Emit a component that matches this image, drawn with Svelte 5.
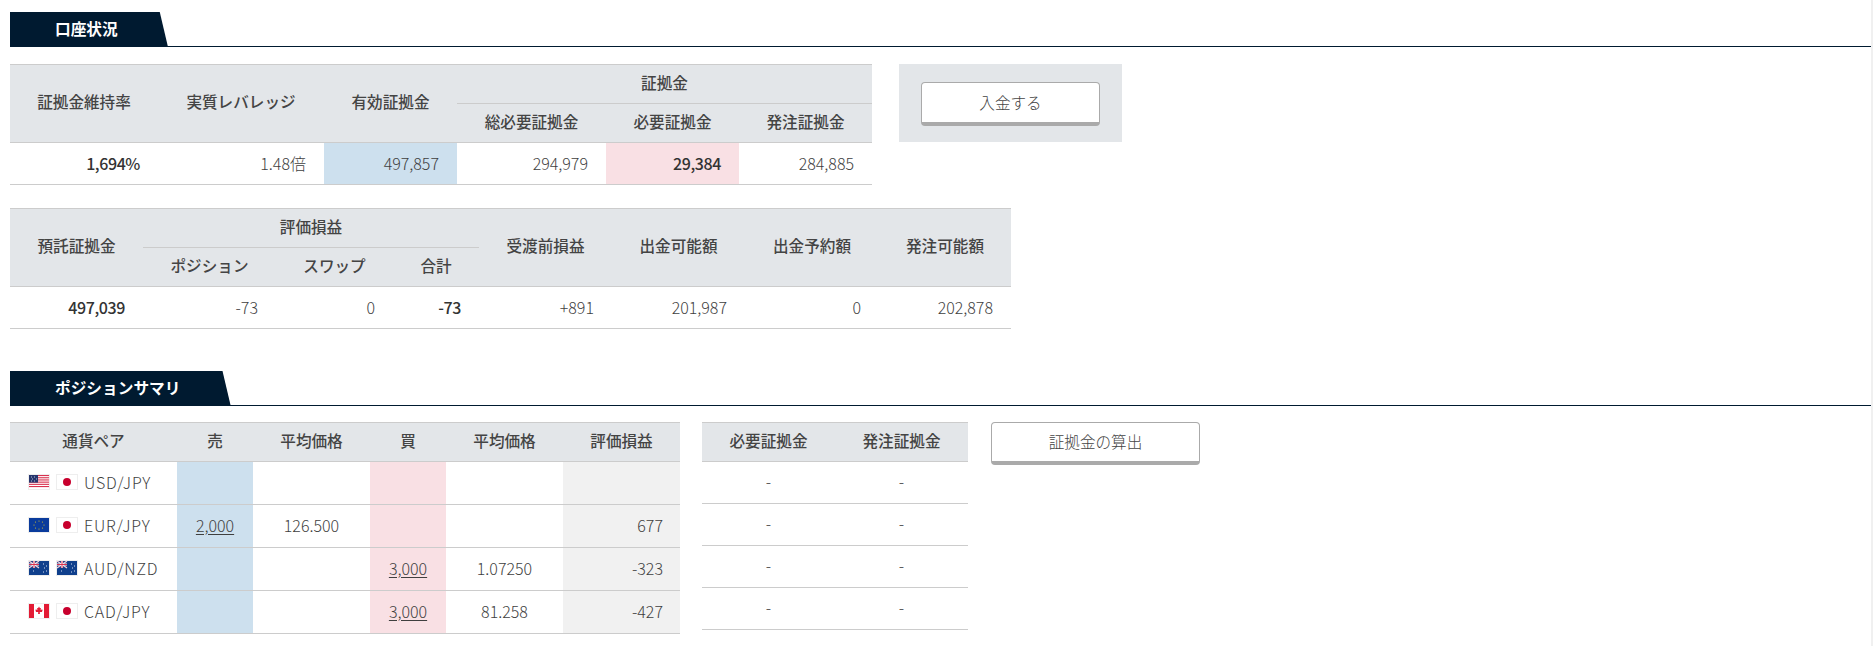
<script>
  const pairs = [
    { a: "us", b: "jp", name: "USD/JPY", sell: "", sellAvg: "", buy: "", buyAvg: "", pl: "" },
    { a: "eu", b: "jp", name: "EUR/JPY", sell: "2,000", sellAvg: "126.500", buy: "", buyAvg: "", pl: "677" },
    { a: "au", b: "nz", name: "AUD/NZD", sell: "", sellAvg: "", buy: "3,000", buyAvg: "1.07250", pl: "-323" },
    { a: "ca", b: "jp", name: "CAD/JPY", sell: "", sellAvg: "", buy: "3,000", buyAvg: "81.258", pl: "-427" }
  ];
  const stars = [[12,3],[15.5,4],[17,7],[15.5,10],[12,11],[8.5,10],[7,7],[8.5,4]];
</script>

{#snippet flag(code)}
  <svg class="flag" width="22" height="16" viewBox="0 0 22 16" aria-hidden="true">
    <rect x="0.5" y="0.5" width="21" height="15" fill="#fff" stroke="#eee" />
    {#if code === "jp"}
      <circle cx="11" cy="8" r="4" fill="#c8002d" />
    {:else if code === "us"}
      <rect x="1" y="1" width="20" height="14" fill="#fff" />
      {#each [1, 3.2, 5.4, 7.6, 9.8, 12] as y}
        <rect x="1" {y} width="20" height="1.1" fill="#d9324f" />
      {/each}
      <rect x="1" y="1" width="9" height="7.6" fill="#26366e" />
      <path d="M3 3h1M6 3h1M4 5h1M8 5h1M3 7h1M6 7h1" stroke="#dfe3f0" stroke-width=".8" />
    {:else if code === "eu"}
      <rect x="1" y="1" width="20" height="14" fill="#0a3b9c" />
      {#each stars as [x, y]}
        <circle cx={x - 1} cy={y + 1} r=".6" fill="#d6c02c" />
      {/each}
    {:else if code === "ca"}
      <rect x="1" y="1" width="20" height="14" fill="#fff" />
      <rect x="1" y="1" width="5" height="14" fill="#e31b35" />
      <rect x="16" y="1" width="5" height="14" fill="#e31b35" />
      <path d="M11 3.5l1 1.8 1-.4-.4 2.3 1.5-.9.5 1-.6 1.2.3.6-2.5-.2.1 2h-1.8l.1-2-2.5.2.3-.6-.6-1.2.5-1 1.5.9-.4-2.3 1 .4z" fill="#e31b35" />
    {:else}
      <rect x="1" y="1" width="20" height="14" fill="#0f3f8c" />
      <rect x="1" y="1" width="10" height="7" fill="#2c3f86" />
      <path d="M1 1l10 7M11 1L1 8" stroke="#f3d6dc" stroke-width="1.2" />
      <path d="M6 1v7M1 4.5h10" stroke="#fff" stroke-width="2" />
      <path d="M6 1v7M1 4.5h10" stroke="#d9324f" stroke-width="1" />
      <path d="M15 4h1M18 6h1M16 8h1M15 12h1M18 11h1M5 11h1" stroke="#d5dff2" stroke-width="1" />
    {/if}
  </svg>
{/snippet}

<main class="page">
  <section>
    <h2 class="head"><span>口座状況</span></h2>
    <div class="row">
      <table class="t1">
        <colgroup><col class="c148" /><col class="c166" /><col class="c133" /><col class="c149" /><col class="c133" /><col class="c133" /></colgroup>
        <thead>
          <tr>
            <th rowspan="2">証拠金維持率</th>
            <th rowspan="2">実質レバレッジ</th>
            <th rowspan="2">有効証拠金</th>
            <th colspan="3">証拠金</th>
          </tr>
          <tr>
            <th>総必要証拠金</th>
            <th>必要証拠金</th>
            <th>発注証拠金</th>
          </tr>
        </thead>
        <tbody>
          <tr>
            <td class="strong">1,694%</td>
            <td>1.48倍</td>
            <td class="blue">497,857</td>
            <td>294,979</td>
            <td class="pink strong">29,384</td>
            <td>284,885</td>
          </tr>
        </tbody>
      </table>
      <div class="panel"><button class="btn deposit">入金する</button></div>
    </div>

    <table class="t2">
      <colgroup><col class="c133" /><col class="c133" /><col class="c117" /><col class="c86" /><col class="c133" /><col class="c133" /><col class="c134" /><col class="c132" /></colgroup>
      <thead>
        <tr>
          <th rowspan="2">預託証拠金</th>
          <th colspan="3">評価損益</th>
          <th rowspan="2">受渡前損益</th>
          <th rowspan="2">出金可能額</th>
          <th rowspan="2">出金予約額</th>
          <th rowspan="2">発注可能額</th>
        </tr>
        <tr>
          <th>ポジション</th>
          <th>スワップ</th>
          <th>合計</th>
        </tr>
      </thead>
      <tbody>
        <tr>
          <td class="strong">497,039</td>
          <td>-73</td>
          <td>0</td>
          <td class="strong">-73</td>
          <td>+891</td>
          <td>201,987</td>
          <td>0</td>
          <td>202,878</td>
        </tr>
      </tbody>
    </table>
  </section>

  <section class="summary">
    <h2 class="head"><span>ポジションサマリ</span></h2>
    <div class="row">
      <table class="t3">
        <colgroup><col class="c167" /><col class="c76" /><col class="c117" /><col class="c76" /><col class="c117" /><col class="c117" /></colgroup>
        <thead>
          <tr>
            <th>通貨ペア</th>
            <th>売</th>
            <th>平均価格</th>
            <th>買</th>
            <th>平均価格</th>
            <th>評価損益</th>
          </tr>
        </thead>
        <tbody>
          {#each pairs as p}
            <tr>
              <td class="pair">
                <div class="pair-in">
                  {@render flag(p.a)}
                  {@render flag(p.b)}
                  <span>{p.name}</span>
                </div>
              </td>
              <td class="blue mid"><u>{p.sell}</u></td>
              <td class="mid">{p.sellAvg}</td>
              <td class="pink mid"><u>{p.buy}</u></td>
              <td class="mid">{p.buyAvg}</td>
              <td class="gray">{p.pl}</td>
            </tr>
          {/each}
        </tbody>
      </table>

      <table class="t4">
        <colgroup><col class="c133" /><col class="c133" /></colgroup>
        <thead>
          <tr>
            <th>必要証拠金</th>
            <th>発注証拠金</th>
          </tr>
        </thead>
        <tbody>
          {#each pairs as p}
            <tr><td class="mid">-</td><td class="mid">-</td></tr>
          {/each}
        </tbody>
      </table>

      <button class="btn calc">証拠金の算出</button>
    </div>
  </section>
</main>

<style>
  :global(body) { margin: 0; background: #fff; }
  .page { box-sizing: border-box; height: 646px; padding: 12px 0 0 10px; border-right: 2px solid #f0f0f0; font-family: "Noto Sans CJK JP", "Noto Sans", sans-serif; color: #3f3f3f; }
  .head { margin: 0; border-bottom: 1px solid #001a30; font-size: 15.7px; line-height: 34px; height: 34px; font-weight: 700; color: #fff; }
  .head span { display: inline-block; height: 34px; padding: 0 50px 0 45px; background: #001a30; clip-path: polygon(0 0, calc(100% - 8px) 0, 100% 100%, 0 100%); }
  .row { display: flex; align-items: flex-start; margin-top: 17px; }
  .summary { margin-top: 42px; }
  .summary .row { margin-top: 16px; }

  table { border-collapse: collapse; table-layout: fixed; }
  th { box-sizing: border-box; background: #e3e6e9; color: #444; font-size: 15.6px; font-weight: 500; line-height: 22px; padding: 0 0 5px; height: 39px; border-top: 1px solid #ccc; border-bottom: 1px solid #ccc; }
  td { box-sizing: border-box; font-size: 16px; font-weight: 300; line-height: 22px; text-align: right; padding: 0 18px 1px 0; height: 42px; border-bottom: 1px solid #ccc; }
  td.strong { font-weight: 500; color: #333; letter-spacing: -.4px; }
  td.mid { text-align: center; padding: 0 0 3px; }
  .blue { background: #cde0ee; }
  .pink { background: #f9e0e4; }
  .gray { background: #f1f1f1; }
  u { text-underline-offset: 2px; }

  .t1 { width: 862px; }
  .t2 { width: 1000px; margin-top: 23px; }
  .t3 { width: 670px; }
  .t4 { width: 266px; margin-left: 22px; }
  .t3 td { height: 43px; padding-bottom: 3px; }
  .t3 td.gray { padding-right: 17px; }
  .c148 { width: 148px; } .c166 { width: 166px; } .c133 { width: 133px; } .c149 { width: 149px; }
  .c117 { width: 117px; } .c86 { width: 86px; } .c134 { width: 134px; } .c132 { width: 132px; }
  .c167 { width: 167px; } .c76 { width: 76px; }

  .pair { padding: 0; }
  .pair-in { display: flex; align-items: center; gap: 6px; padding-left: 18px; text-align: left; letter-spacing: .05em; }
  .flag { display: block; flex: none; }

  .panel { box-sizing: border-box; width: 223px; height: 78px; margin-left: 27px; padding-top: 2px; background: #e3e6e9; display: flex; align-items: center; justify-content: center; }
  .btn { display: block; box-sizing: border-box; background: #fff; border: 1px solid #aaa; border-bottom: 4px solid #aaa; border-radius: 4px; font: inherit; font-size: 15.6px; font-weight: 300; color: #444; padding: 0 0 2px; cursor: pointer; }
  .deposit { width: 179px; height: 44px; }
  .calc { width: 209px; height: 43px; margin-left: 23px; }
</style>
